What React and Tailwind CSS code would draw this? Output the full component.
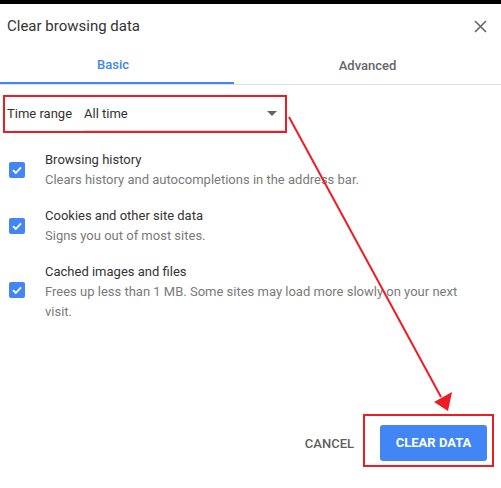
import React from "react";

function Check() {
  return (
    <div className="w-[16px] h-[16px] rounded-[2px] bg-[#4285f4] flex items-center justify-center shrink-0">
      <svg width="12" height="12" viewBox="0 0 12 12">
        <path d="M2 6.2 L4.8 9 L10 3.4" fill="none" stroke="white" strokeWidth="1.8" />
      </svg>
    </div>
  );
}

function Item({ title, sub }) {
  return (
    <div className="flex items-center">
      <div className="w-[45px] pl-[9px] flex items-center self-stretch">
        <Check />
      </div>
      <div className="flex flex-col">
        <div className="text-[13px] leading-[21px] text-[#333]">{title}</div>
        <div className="text-[13px] leading-[20px] text-[#7a7a7a] w-[420px]">{sub}</div>
      </div>
    </div>
  );
}

export default function App() {
  return (
    <div className="relative w-[501px] h-[488px] bg-white overflow-hidden" style={{ fontFamily: "Roboto, 'Liberation Sans', sans-serif" }}>
      <div className="h-[4px] bg-black" />
      <div className="flex items-center justify-between pl-[7px] pr-[14px] h-[44px]">
        <div className="text-[15px] text-[#333]">Clear browsing data</div>
        <svg width="13" height="13" viewBox="0 0 13 13">
          <path d="M1 1 L12 12 M12 1 L1 12" stroke="#666" strokeWidth="1.6" />
        </svg>
      </div>
      <div className="flex border-b border-[#e0e0e0] h-[37px]">
        <div className="w-[234px] flex items-center justify-center border-b-2 border-[#4285f4] text-[13px] font-medium text-[#4285f4] pr-[8px]">Basic</div>
        <div className="flex-1 flex items-center justify-center text-[13px] font-medium text-[#666]">Advanced</div>
      </div>
      <div className="mt-[10px] ml-[3px] w-[284px] h-[38px] border-2 border-[#ed1c24] flex items-center">
        <div className="pl-[2px] w-[79px] text-[13px] text-[#333]">Time range</div>
        <div className="flex-1 mr-[1px] h-[28px] mt-[6px] border-b border-[#ddd] flex items-center justify-between pb-[6px]">
          <span className="text-[13px] text-[#333]">All time</span>
          <svg width="10" height="5" viewBox="0 0 10 5" className="mr-[7px]">
            <path d="M0 0 L10 0 L5 5 Z" fill="#666" />
          </svg>
        </div>
      </div>
      <div className="mt-[16px] flex flex-col gap-[15px]">
        <Item title="Browsing history" sub="Clears history and autocompletions in the address bar." />
        <Item title="Cookies and other site data" sub="Signs you out of most sites." />
        <div className="flex">
          <div className="w-[45px] pl-[9px] pt-[21px]"><Check /></div>
          <div className="flex flex-col">
            <div className="text-[13px] leading-[21px] text-[#333]">Cached images and files</div>
            <div className="text-[13px] leading-[20px] text-[#7a7a7a] w-[430px]">Frees up less than 1 MB. Some sites may load more slowly on your next visit.</div>
          </div>
        </div>
      </div>
      <div className="absolute left-0 right-0 top-[414px] flex items-start justify-end pr-[7px]">
        <div className="text-[13px] font-medium text-[#5f5f5f] mr-[9px] mt-[20px]">CANCEL</div>
        <div className="w-[131px] h-[53px] border-2 border-[#ed1c24] flex items-start justify-end pr-[5px] pt-[9px]">
          <div className="w-[107px] h-[36px] rounded-[3px] bg-[#4285f4] text-white text-[13px] font-bold flex items-center justify-center">CLEAR DATA</div>
        </div>
      </div>
      <svg className="absolute left-0 top-0 pointer-events-none" width="501" height="488">
        <line x1="289" y1="117" x2="441" y2="397" stroke="#ed1c24" strokeWidth="2" />
        <path d="M434 402 L452 392 L448 411 Z" fill="#ed1c24" />
      </svg>
    </div>
  );
}
